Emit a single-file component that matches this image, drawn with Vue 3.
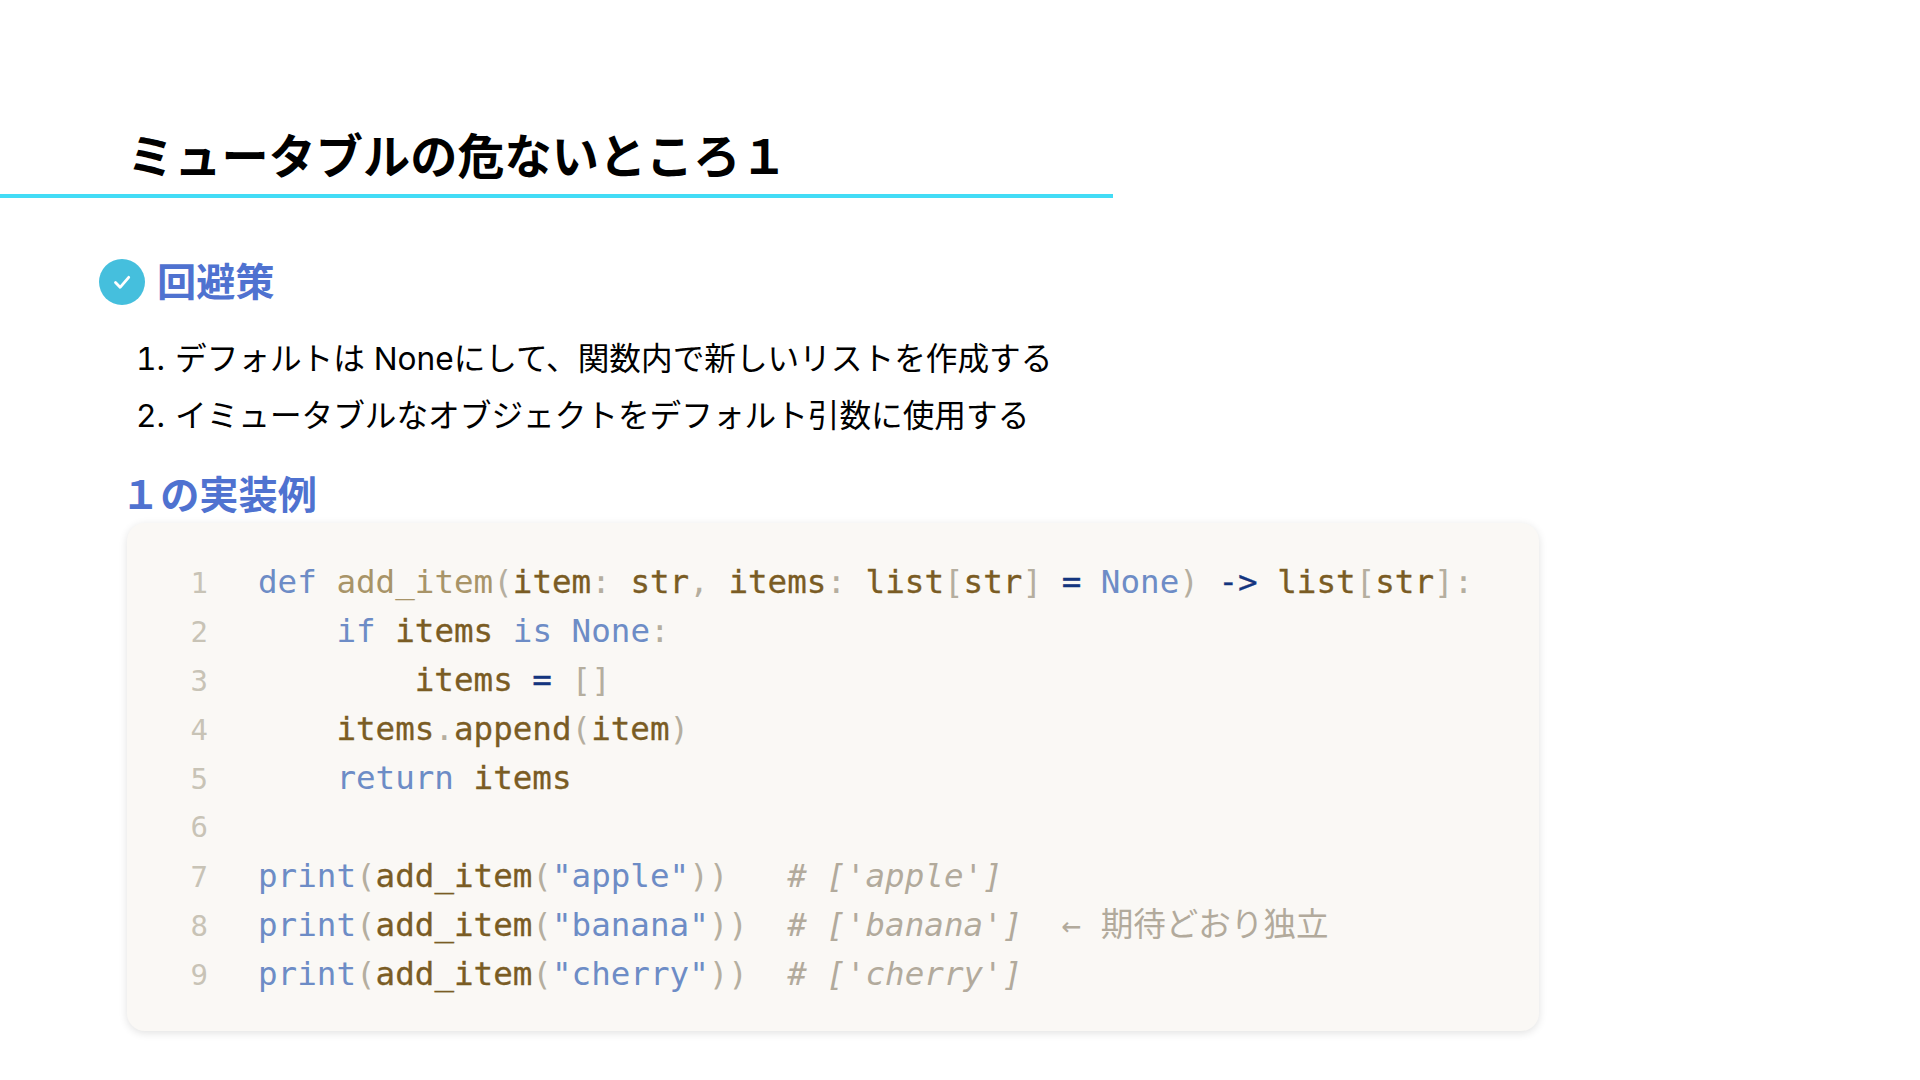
<script setup>
const T = (c, t) => ({ c, t })
const steps = [
  'デフォルトは Noneにして、関数内で新しいリストを作成する',
  'イミュータブルなオブジェクトをデフォルト引数に使用する',
]
const lines = [
  [T('k','def'),T('',' '),T('f','add_item'),T('p','('),T('v','item'),T('p',':'),T('',' '),T('v','str'),T('p',','),T('',' '),T('v','items'),T('p',':'),T('',' '),T('v','list'),T('p','['),T('v','str'),T('p',']'),T('',' '),T('o','='),T('',' '),T('k','None'),T('p',')'),T('',' '),T('o','->'),T('',' '),T('v','list'),T('p','['),T('v','str'),T('p',']'),T('p',':')],
  [T('','    '),T('k','if'),T('',' '),T('v','items'),T('',' '),T('k','is'),T('',' '),T('k','None'),T('p',':')],
  [T('','        '),T('v','items'),T('',' '),T('o','='),T('',' '),T('p','[]')],
  [T('','    '),T('v','items'),T('p','.'),T('v','append'),T('p','('),T('v','item'),T('p',')')],
  [T('','    '),T('k','return'),T('',' '),T('v','items')],
  [],
  [T('k','print'),T('p','('),T('v','add_item'),T('p','('),T('k','"apple"'),T('p','))'),T('','   '),T('c',"# ['apple']")],
  [T('k','print'),T('p','('),T('v','add_item'),T('p','('),T('k','"banana"'),T('p','))'),T('','  '),T('c',"# ['banana']"),T('n','  ← 期待どおり独立')],
  [T('k','print'),T('p','('),T('v','add_item'),T('p','('),T('k','"cherry"'),T('p','))'),T('','  '),T('c',"# ['cherry']")],
]
</script>

<template>
  <main class="slide">
    <h1 class="title">ミュータブルの危ないところ１</h1>
    <section class="body">
      <h2 class="lead">
        <svg class="check" viewBox="0 0 46 46" width="46" height="46" aria-hidden="true">
          <circle cx="23" cy="23" r="23" fill="#45bfdd" />
          <path d="M16.5 23.5l4.6 4.8 8.6-10" fill="none" stroke="#fff" stroke-width="2.8" stroke-linecap="round" stroke-linejoin="round" />
        </svg>
        <span class="lead-text">回避策</span>
      </h2>
      <ol class="steps">
        <li v-for="(s, i) in steps" :key="i" class="step"><span class="step-num">{{ i + 1 }}.</span>{{ s }}</li>
      </ol>
      <h3 class="sub">１の実装例</h3>
      <div class="card">
        <div v-for="(line, i) in lines" :key="i" class="row">
          <span class="num">{{ i + 1 }}</span>
          <code class="code"><span v-for="(s, j) in line" :key="j" :class="s.c">{{ s.t }}</span></code>
        </div>
      </div>
    </section>
  </main>
</template>

<style scoped>
.slide {
  width: 1920px;
  height: 1080px;
  background: #fff;
  overflow: hidden;
  padding-top: 118px;
  box-sizing: border-box;
  font-family: Inter, "Noto Sans CJK JP", sans-serif;
  color: #000;
}
.title {
  width: 1113px;
  box-sizing: border-box;
  margin: 0;
  padding-left: 127px;
  height: 80px;
  border-bottom: 4px solid #42dcf6;
  font-family: "Noto Sans CJK JP", sans-serif;
  font-size: 47.2px;
  line-height: 71px;
  font-weight: 700;
}
.body {
  padding-left: 99px;
}
.lead {
  display: flex;
  align-items: center;
  gap: 12px;
  margin: 61px 0 0;
  height: 46px;
  font-family: "Noto Sans CJK JP", sans-serif;
  font-size: 39.2px;
  font-weight: 700;
  color: #4f72d0;
}
.lead-text { margin-top: -7px; }
.check { flex: none; }
.steps {
  margin: 25px 0 0;
  padding: 0 0 0 37px;
  list-style: none;
  font-size: 31.65px;
  line-height: 57px;
}
.step { display: flex; }
.step-num { width: 39px; flex: none; font-variant-numeric: tabular-nums; }
.sub {
  margin: 18px 0 0 22px;
  font-family: "Noto Sans CJK JP", sans-serif;
  font-size: 39.2px;
  line-height: 60px;
  font-weight: 700;
  color: #4f72d0;
}
.card {
  width: 1412px;
  height: 508px;
  box-sizing: border-box;
  margin: 1px 0 0 28px;
  padding: 35px 0 0;
  background: #faf8f5;
  border-radius: 18px;
  box-shadow: 0 2px 8px rgba(0,0,0,.12);
}
.row {
  display: flex;
  height: 49px;
  line-height: 49px;
  align-items: baseline;
}
.num {
  width: 81px;
  text-align: right;
  font-family: "DejaVu Sans Mono", monospace;
  font-size: 29px;
  color: #c8c3b6;
}
.code {
  margin-left: 50px;
  white-space: pre;
  font-family: "DejaVu Sans Mono", "Noto Sans CJK JP", monospace;
  font-size: 32.55px;
}
.k { color: #6d8cc6; }
.f { color: #a89468; }
.v { color: #7a5c24; -webkit-text-stroke: 0.3px #7a5c24; }
.p { color: #b5ae9f; }
.o { color: #14357f; -webkit-text-stroke: 0.3px #14357f; }
.c { color: #b2aa9c; font-style: italic; }
.n { color: #b2aa9c; }
</style>
